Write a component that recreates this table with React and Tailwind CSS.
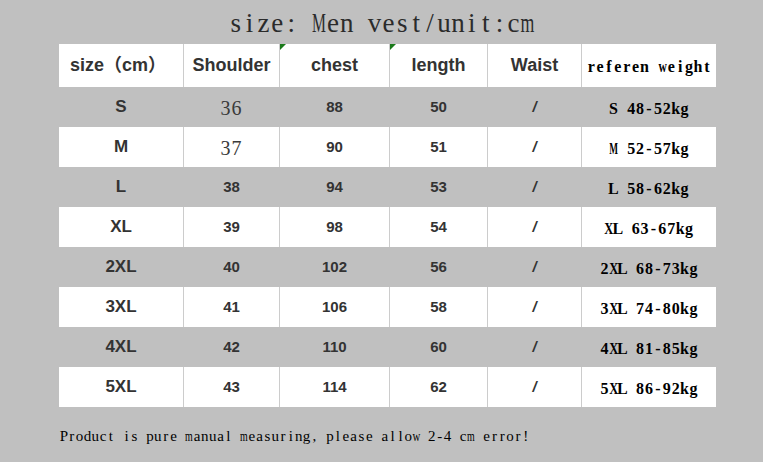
import React from "react";

const rows = [
  { size: "S", shoulder: "36", chest: "88", length: "50", weight: "S 48-52kg", serif: true },
  { size: "M", shoulder: "37", chest: "90", length: "51", weight: "M 52-57kg", serif: true },
  { size: "L", shoulder: "38", chest: "94", length: "53", weight: "L 58-62kg" },
  { size: "XL", shoulder: "39", chest: "98", length: "54", weight: "XL 63-67kg" },
  { size: "2XL", shoulder: "40", chest: "102", length: "56", weight: "2XL 68-73kg" },
  { size: "3XL", shoulder: "41", chest: "106", length: "58", weight: "3XL 74-80kg" },
  { size: "4XL", shoulder: "42", chest: "110", length: "60", weight: "4XL 81-85kg" },
  { size: "5XL", shoulder: "43", chest: "114", length: "62", weight: "5XL 86-92kg" },
];

const arial = "font-['Liberation_Sans',Arial,sans-serif]";
const serif = "font-['Liberation_Serif','Times_New_Roman',serif]";

// wide serif letters get squeezed to fit a half-width cell
const squeeze = {
  M: "scale-x-[0.58]",
  W: "scale-x-[0.6]",
  m: "scale-x-[0.66]",
  w: "scale-x-[0.72]",
  X: "scale-x-[0.78]",
};

// fixed-width cells per character, so the serif text sits on a monospace grid
const Mono = ({ text, cw }) => (
  <span className="inline-flex whitespace-pre">
    {text.split("").map((c, i) => (
      <span key={i} className={`inline-flex justify-center ${cw}`}>
        <span className={`inline-block ${squeeze[c] || ""}`}>{c === " " ? "\u00a0" : c}</span>
      </span>
    ))}
  </span>
);

const Corner = () => (
  <span className="absolute left-0 top-0 w-0 h-0 border-t-[6px] border-r-[6px] border-t-[#1a7a1a] border-r-transparent" />
);

const SizeChart = () => {
  return (
    <div className="w-[763px] h-[462px] bg-[#c0c0c0] text-[#333] overflow-hidden">
      <div className={`h-[44px] flex items-center justify-center pt-[3px] ${serif} text-[27px] text-[#2b2b2b]`}>
        <Mono text="size: Men vest/unit:cm" cw="w-[13.9px]" />
      </div>

      <div className="ml-[59px] w-[657px]">
        {/* header */}
        <div className={`grid grid-cols-[124px_96px_110px_98px_94px_135px] h-[43px] bg-white ${arial} font-bold text-[18px]`}>
          <div className="flex items-center justify-center pr-[6px] font-['Liberation_Sans','Noto_Sans_CJK_SC',sans-serif]">size（cm）</div>
          <div className="flex items-center justify-center border-l border-[#cccccc]">Shoulder</div>
          <div className="relative flex items-center justify-center border-l border-[#cccccc]">
            <Corner />
            chest
          </div>
          <div className="relative flex items-center justify-center border-l border-[#cccccc]">
            <Corner />
            length
          </div>
          <div className="flex items-center justify-center border-l border-[#cccccc]">Waist</div>
          <div className={`flex items-center justify-center border-l border-[#cccccc] ${serif} text-[16px] text-black pt-[2px]`}>
            <Mono text="referen weight" cw="w-[8.9px]" />
          </div>
        </div>

        {rows.map((r, i) => {
          const line = i % 2 === 0 ? "border-[#c0c0c0]" : "border-[#cccccc]";
          return (
            <div
              key={r.size}
              className={`grid grid-cols-[124px_96px_110px_98px_94px_135px] h-[40px] ${arial} font-bold text-[15px] ${
                i % 2 === 0 ? "bg-[#c0c0c0]" : "bg-white"
              }`}
            >
              <div className="flex items-center justify-center text-[17px]">{r.size}</div>
              <div className={`flex items-center justify-center border-l ${line}`}>
                {r.serif ? (
                  <span className={`${serif} font-normal text-[20px] tracking-[1px] text-[#3a3a3a] pt-[2px]`}>
                    {r.shoulder}
                  </span>
                ) : (
                  r.shoulder
                )}
              </div>
              <div className={`flex items-center justify-center border-l ${line}`}>{r.chest}</div>
              <div className={`flex items-center justify-center border-l ${line}`}>{r.length}</div>
              <div className={`flex items-center justify-center border-l ${line}`}>
                <span className="italic">/</span>
              </div>
              <div className={`flex items-center justify-center border-l ${line} ${serif} text-[16px] text-black pt-[3px]`}>
                <Mono text={r.weight} cw="w-[8.9px]" />
              </div>
            </div>
          );
        })}
      </div>

      <div className={`pl-[60px] pt-[18px] ${serif} text-[15px] text-black`}>
        <Mono text="Product is pure manual measuring, please allow 2-4 cm error!" cw="w-[7.84px]" />
      </div>
    </div>
  );
};

export default function App() {
  return <SizeChart />;
}
